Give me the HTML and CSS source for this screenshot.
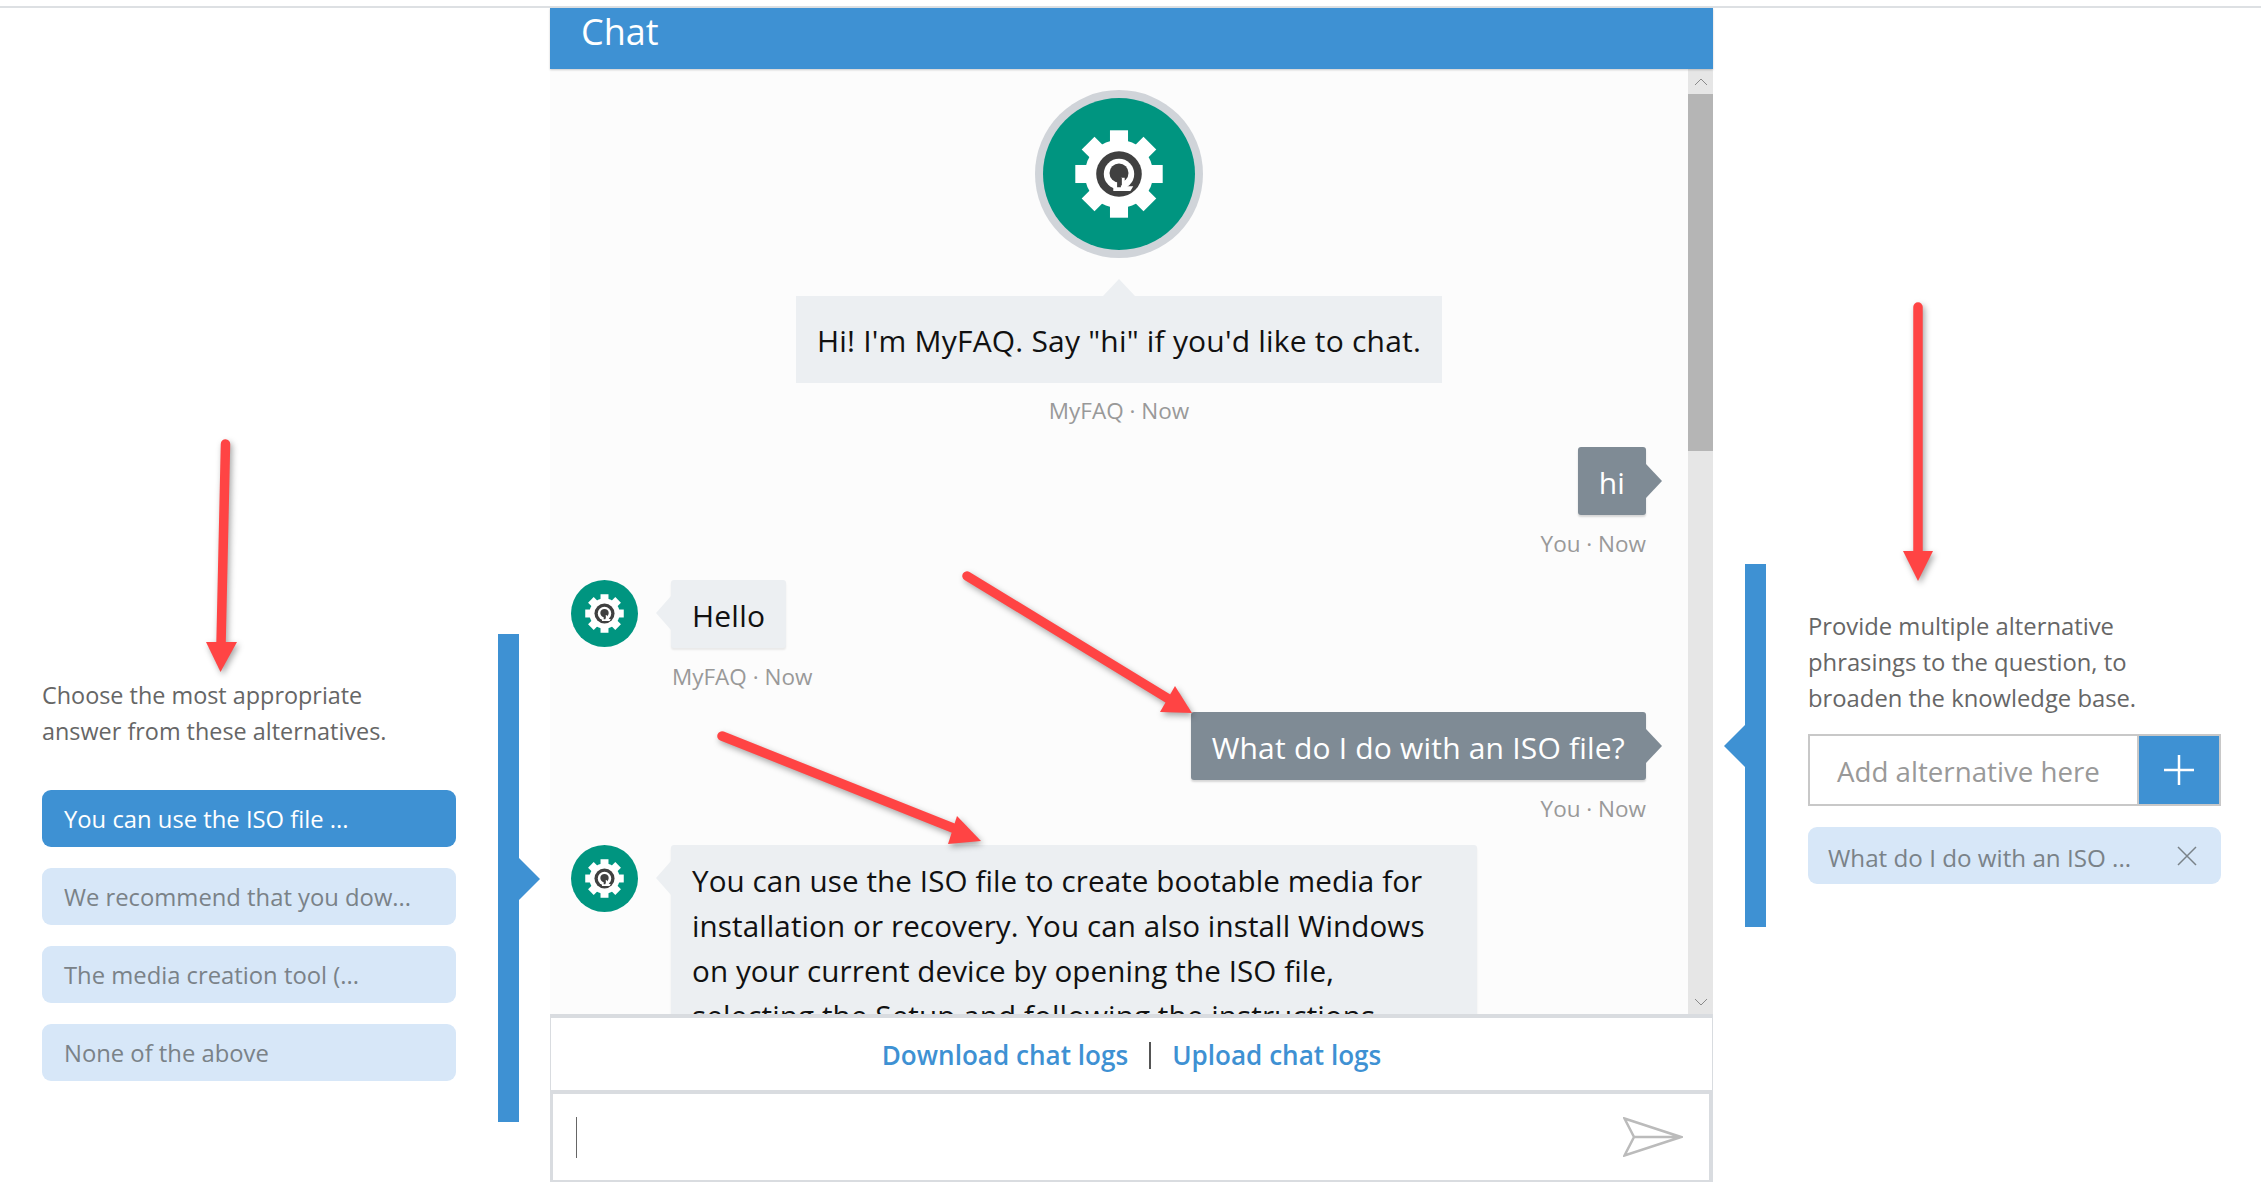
FILE: index.html
```html
<!DOCTYPE html>
<html lang="en">
<head>
<meta charset="utf-8">
<title>Chat</title>
<link rel="stylesheet" href="styles.css">
</head>
<body>
<svg class="defs" width="0" height="0" aria-hidden="true">
  <symbol id="bot" viewBox="0 0 160 160">
    <circle cx="80" cy="80" r="80" fill="#009580"/>
    <g fill="#fff">
      <circle cx="80" cy="80" r="36"/>
      <rect x="70.500" y="34" width="19" height="92"/>
      <rect x="70.500" y="34" width="19" height="92" transform="rotate(45 80 80)"/>
      <rect x="70.500" y="34" width="19" height="92" transform="rotate(90 80 80)"/>
      <rect x="70.500" y="34" width="19" height="92" transform="rotate(135 80 80)"/>
    </g>
    <circle cx="80" cy="80" r="24" fill="#404040"/>
    <circle cx="80" cy="80" r="16" fill="#fff"/>
    <circle cx="80" cy="79" r="10" fill="#404040"/>
    <path d="M78 85h6v13h-6z" fill="#404040"/>
    <path d="M86 84v9h9l-3 5H74v-4h8V84z" fill="#fff"/>
    <path d="M80 84h3v8h-3z" fill="#404040"/>
  </symbol>
</svg>

<div class="page">
  <aside class="side side-left">
    <div class="side-body">
      <p class="hint">Choose the most appropriate<br>answer from these alternatives.</p>
      <ul class="answers">
        <li class="answer answer-on">You can use the ISO file ...</li>
        <li class="answer">We recommend that you dow...</li>
        <li class="answer">The media creation tool (...</li>
        <li class="answer">None of the above</li>
      </ul>
    </div>
    <div class="bar bar-left"></div>
  </aside>

  <main class="chat">
    <header class="chat-head">Chat</header>
    <div class="chat-mid">
      <div class="msgs">
        <div class="intro">
          <div class="avatar-big"><svg class="bot-big"><use href="#bot"/></svg></div>
          <div class="bubble bubble-intro">Hi! I'm MyFAQ. Say "hi" if you'd like to chat.</div>
          <div class="meta meta-intro">MyFAQ · Now</div>
        </div>

        <div class="out">
          <div class="bubble bubble-out">hi</div>
          <div class="meta">You · Now</div>
        </div>

        <div class="in">
          <svg class="bot-small"><use href="#bot"/></svg>
          <div class="in-body">
            <div class="bubble bubble-in">Hello</div>
            <div class="meta meta-in">MyFAQ · Now</div>
          </div>
        </div>

        <div class="out">
          <div class="bubble bubble-out">What do I do with an ISO file?</div>
          <div class="meta">You · Now</div>
        </div>

        <div class="in">
          <svg class="bot-small"><use href="#bot"/></svg>
          <div class="in-body">
            <div class="bubble bubble-in bubble-long">You can use the ISO file to create bootable media for installation or recovery. You can also install Windows on your current device by opening the ISO file, selecting the Setup and following the instructions.</div>
          </div>
        </div>
      </div>
      <div class="scroll">
        <div class="scroll-btn"><svg width="14" height="8" viewBox="0 0 14 8"><path d="M1 7l6-6 6 6" fill="none" stroke="#8a8a8a"/></svg></div>
        <div class="scroll-thumb"></div>
        <div class="scroll-track"></div>
        <div class="scroll-btn"><svg width="14" height="8" viewBox="0 0 14 8"><path d="M1 1l6 6 6-6" fill="none" stroke="#8a8a8a"/></svg></div>
      </div>
    </div>
    <div class="logs">
      <a class="log-link">Download chat logs</a>
      <span class="log-sep"></span>
      <a class="log-link">Upload chat logs</a>
    </div>
    <div class="compose">
      <span class="cursor"></span>
      <svg class="send" width="60" height="40" viewBox="0 0 60 40"><path d="M1.500 1.500L58 20 1.500 38.500 11 20zM11 20H58" fill="none" stroke="#bbb" stroke-width="2.500" stroke-linejoin="miter"/></svg>
    </div>
  </main>

  <aside class="side side-right">
    <div class="bar bar-right"></div>
    <div class="side-body-right">
      <p class="hint hint-right">Provide multiple alternative<br>phrasings to the question, to<br>broaden the knowledge base.</p>
      <div class="add">
        <div class="add-field">Add alternative here</div>
        <div class="add-btn"><svg width="30" height="30" viewBox="0 0 30 30"><path d="M15 0v30M0 15h30" stroke="#fff" stroke-width="2.500"/></svg></div>
      </div>
      <div class="chip">
        <span>What do I do with an ISO ...</span>
        <svg class="chip-x" width="20" height="20" viewBox="0 0 20 20"><path d="M1 1l18 18M19 1L1 19" stroke="#7a8288" stroke-width="1.500"/></svg>
      </div>
    </div>
  </aside>
</div>

<svg class="marks" viewBox="0 0 2261 1183" aria-hidden="true">
  <g class="mark-lines">
    <path d="M225.500 444L221 645"/>
    <path d="M1918 307V553"/>
    <path d="M967 576L1172 701"/>
    <path d="M722 736L958 830"/>
  </g>
  <g class="mark-heads">
    <path d="M206 642H237L220.500 672z"/>
    <path d="M1903 551H1933L1918 581z"/>
    <path d="M1175 686L1192 713 1160 712z"/>
    <path d="M957 816L981 841 948 844z"/>
  </g>
</svg>
</body>
</html>
```
FILE: styles.css
```css
* { box-sizing: border-box; }
html, body { margin: 0; height: 100%; }
body {
  background: #fff;
  font-family: "Open Sans", "Noto Sans", sans-serif;
  overflow: hidden;
  position: relative;
}
.defs { position: absolute; }
.page {
  display: flex;
  height: 1183px;
  padding-top: 8px;
  background: linear-gradient(#fff 0 6px, #dde0e3 6px 8px, #fff 8px);
}
.side { display: flex; align-items: flex-start; }
.side-left { width: 550px; padding: 626px 0 0 42px; }
.side-body { width: 414px; margin-right: 42px; padding-top: 43px; }
.side-right { flex: 1; padding: 556px 0 0 32px; }
.side-body-right { width: 413px; margin-left: 42px; padding-top: 44px; }
.hint {
  margin: 0;
  font-size: 23.400px;
  line-height: 36px;
  color: #666;
}
.hint-right { font-size: 23.800px; }
.answers {
  list-style: none;
  margin: 41px 0 0;
  padding: 0;
  display: flex;
  flex-direction: column;
  gap: 21px;
}
.answer {
  height: 57px;
  padding: 2px 21px 0 22px;
  border-radius: 9px;
  background: #d7e7f8;
  color: #7a8288;
  font-size: 23.800px;
  line-height: 55px;
}
.answer-on { background: #3e91d3; color: #fff; }
.bar { width: 21px; background: #3e91d3; position: relative; }
.bar-left { height: 488px; }
.bar-left::after {
  content: "";
  position: absolute;
  left: 21px;
  top: 224px;
  border-left: 21px solid #3e91d3;
  border-top: 21px solid transparent;
  border-bottom: 21px solid transparent;
}
.bar-right { height: 363px; }
.bar-right::after {
  content: "";
  position: absolute;
  left: -21px;
  top: 161px;
  border-right: 21px solid #3e91d3;
  border-top: 21px solid transparent;
  border-bottom: 21px solid transparent;
}

.chat {
  width: 1163px;
  height: 1175px;
  display: flex;
  flex-direction: column;
}
.chat-head {
  height: 61px;
  flex: none;
  padding-left: 31px;
  background: #3e91d3;
  color: #fff;
  font-size: 36px;
  line-height: 48px;
  box-shadow: 0 1px 2px rgba(0,0,0,.2);
  position: relative;
}
.chat-mid { height: 945px; flex: none; display: flex; }
.msgs {
  width: 1138px;
  height: 945px;
  overflow: hidden;
  padding: 21px 42px 0 21px;
  background: #fcfcfc;
}
.intro { display: flex; flex-direction: column; align-items: center; margin-bottom: 21px; margin-left: 21px; }
.avatar-big {
  width: 168px;
  height: 168px;
  padding: 8px;
  border-radius: 50%;
  background: #d0d4d9;
  margin-bottom: 38px;
}
.bot-big { display: block; width: 152px; height: 152px; }
.bot-small { display: block; width: 67px; height: 67px; flex: none; }
.bubble {
  position: relative;
  font-size: 30px;
  letter-spacing: .2px;
  line-height: 45px;
  padding: 13px 21px 10px;
  border-radius: 3px;
  background: #eceff2;
  color: #111;
}
.bubble-intro { padding: 22px 21px 20px; border-radius: 0; }
.bubble-intro::before {
  content: "";
  position: absolute;
  left: 50%;
  top: -17px;
  margin-left: -16px;
  border-bottom: 17px solid #eceff2;
  border-left: 16px solid transparent;
  border-right: 16px solid transparent;
}
.bubble-out {
  background: #7f8b95;
  color: #fff;
  box-shadow: 0 2px 2px rgba(0,0,0,.15);
}
.bubble-out::after {
  content: "";
  position: absolute;
  left: 100%;
  top: 50%;
  margin-top: -17px;
  border-left: 16px solid #7f8b95;
  border-top: 17px solid transparent;
  border-bottom: 17px solid transparent;
}
.bubble-in { box-shadow: 0 2px 2px rgba(0,0,0,.08); width: fit-content; }
.bubble-in::before {
  content: "";
  position: absolute;
  right: 100%;
  top: 16px;
  border-right: 15px solid #eceff2;
  border-top: 17px solid transparent;
  border-bottom: 17px solid transparent;
}
.bubble-long { width: 806px; font-size: 29.600px; letter-spacing: .1px; }
.meta {
  margin-top: 14px;
  font-size: 22.500px;
  line-height: 30px;
  color: #999;
}
.meta-intro { margin-top: 13px; }
.meta-in { margin-left: 1px; }
.out { display: flex; flex-direction: column; align-items: flex-end; margin-bottom: 21px; }
.in { display: flex; gap: 33px; margin-bottom: 20px; }
.in-body { display: flex; flex-direction: column; align-items: flex-start; }
.scroll { width: 25px; display: flex; flex-direction: column; background: #e6e6e6; }
.scroll-btn { height: 25px; display: flex; align-items: center; justify-content: center; flex: none; }
.scroll-thumb { height: 357px; flex: none; background: #b5b5b5; }
.scroll-track { flex: 1; }
.logs {
  height: 80px;
  flex: none;
  display: flex;
  align-items: center;
  justify-content: center;
  gap: 21px;
  padding-top: 2px;
  background: #fff;
  border-top: 4px solid #d9dce0;
  border-bottom: 4px solid #d9dce0;
  border-left: 1px solid #d9dce0;
  border-right: 1px solid #d9dce0;
}
.log-link { font-size: 26.100px; color: #3e91d3; font-weight: 600; }
.log-sep { width: 2px; height: 27px; background: #555; }
.compose {
  flex: none;
  height: 88px;
  display: flex;
  align-items: center;
  justify-content: space-between;
  padding: 0 26px 0 23px;
  background: #fff;
  border-left: 3px solid #d9dce0;
  border-right: 4px solid #d9dce0;
  border-bottom: 2px solid #d9dce0;
}
.cursor { width: 1px; height: 41px; background: #666; }
.send { display: block; }
.add {
  display: flex;
  height: 72px;
  margin-top: 18px;
  border: 2px solid #c8c8c8;
}
.add-field {
  flex: 1;
  padding: 4px 0 0 27px;
  font-size: 27.700px;
  line-height: 62px;
  color: #999;
  border-right: 2px solid #c8c8c8;
}
.add-btn {
  width: 80px;
  background: #3e91d3;
  display: flex;
  align-items: center;
  justify-content: center;
}
.chip {
  height: 57px;
  margin-top: 21px;
  padding: 3px 24px 0 20px;
  display: flex;
  align-items: center;
  justify-content: space-between;
  border-radius: 9px;
  background: #d7e7f8;
  color: #7a8288;
  font-size: 24.200px;
}
.chip-x { margin-top: -3px; }
.marks {
  position: absolute;
  left: 0;
  top: 0;
  width: 2261px;
  height: 1183px;
  pointer-events: none;
  filter: drop-shadow(2px 3px 3px rgba(0,0,0,.35));
}
.mark-lines path { fill: none; stroke: #ff4444; stroke-width: 9.500; stroke-linecap: round; }
.mark-heads path { fill: #ff4444; }
```
